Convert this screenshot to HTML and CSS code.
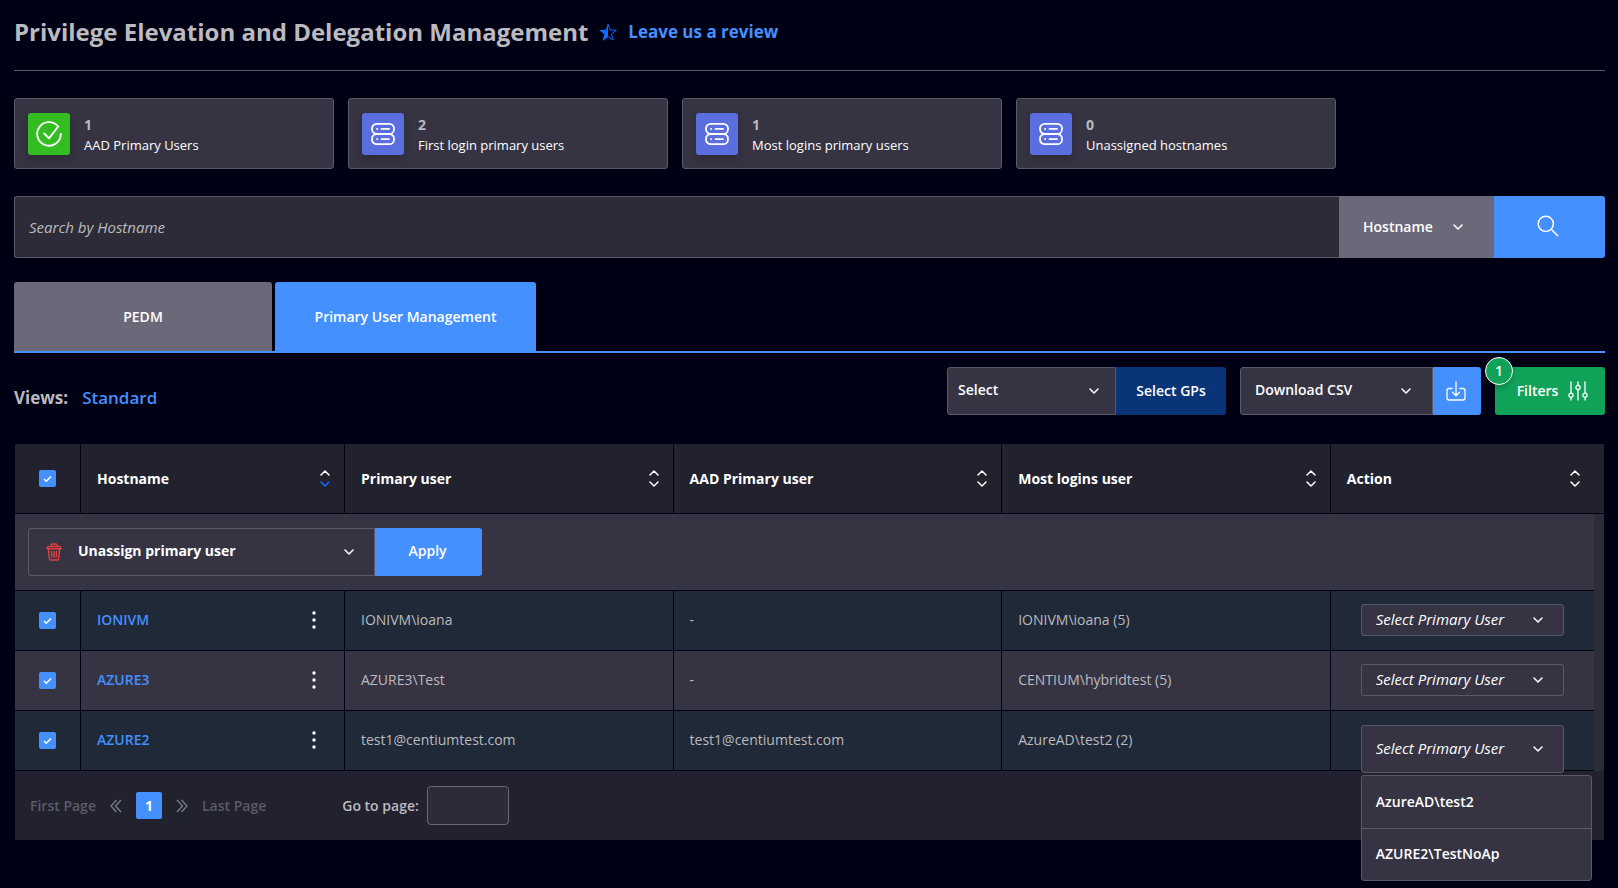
FILE: index.html
```html
<!DOCTYPE html>
<html lang="en">
<head>
<meta charset="utf-8">
<title>Privilege Elevation and Delegation Management</title>
<link rel="stylesheet" href="styles.css">
</head>
<body>
<svg class="sprite" aria-hidden="true">
  <symbol id="chevron" viewBox="0 0 10 6"><path d="M1 1l4 4 4-4" fill="none" stroke="currentColor" stroke-width="1.5" stroke-linecap="round" stroke-linejoin="round"/></symbol>
  <symbol id="sort-up" viewBox="0 0 10 6"><path d="M1 5l4-4 4 4" fill="none" stroke="currentColor" stroke-width="1.5" stroke-linecap="round" stroke-linejoin="round"/></symbol>
  <symbol id="server" viewBox="0 0 24 24"><g fill="none" stroke="currentColor" stroke-width="1.800" stroke-linecap="round"><rect x="1" y="1.800" width="22" height="10.200" rx="4.800"/><rect x="1" y="12" width="22" height="10.200" rx="4.800"/><path d="M10.500 6.900h7.500M10.500 17.100h7.500M6 6.900h.3M6 17.100h.3"/></g></symbol>
  <symbol id="dots" viewBox="0 0 4 18"><g fill="currentColor"><circle cx="2" cy="2" r="1.700"/><circle cx="2" cy="9" r="1.700"/><circle cx="2" cy="16" r="1.700"/></g></symbol>
</svg>
<main class="page">
  <header class="page-header">
    <h1 class="title">Privilege Elevation and Delegation Management</h1>
    <a class="review" href="#">
      <svg class="star" viewBox="0 0 18 18" aria-hidden="true"><path d="M9 .2v14.100L3.400 17.900l2-6.700L0 6.900l6.900-.2z" fill="currentColor"/><path d="M9 1l2.100 6 6.200.2-4.900 3.900 1.800 5.900L9 13.500" fill="none" stroke="currentColor" stroke-width="1"/></svg>
      Leave us a review
    </a>
  </header>

  <section class="cards">
    <article class="card">
      <span class="card-icon card-icon-ok"><svg class="icon-26" viewBox="0 0 26 26" aria-hidden="true"><path d="M24.800 13A11.800 11.800 0 1 1 22.200 5.500L13 17.300 8.200 12.500" fill="none" stroke="currentColor" stroke-width="1.900" stroke-linecap="round" stroke-linejoin="round"/></svg></span>
      <div class="card-text"><p class="card-count">1</p><p class="card-label">AAD Primary Users</p></div>
    </article>
    <article class="card">
      <span class="card-icon"><svg class="icon-24" aria-hidden="true"><use href="#server"/></svg></span>
      <div class="card-text"><p class="card-count">2</p><p class="card-label">First login primary users</p></div>
    </article>
    <article class="card">
      <span class="card-icon"><svg class="icon-24" aria-hidden="true"><use href="#server"/></svg></span>
      <div class="card-text"><p class="card-count">1</p><p class="card-label">Most logins primary users</p></div>
    </article>
    <article class="card">
      <span class="card-icon"><svg class="icon-24" aria-hidden="true"><use href="#server"/></svg></span>
      <div class="card-text"><p class="card-count">0</p><p class="card-label">Unassigned hostnames</p></div>
    </article>
  </section>

  <form class="search">
    <input class="search-input" type="search" placeholder="Search by Hostname" aria-label="Search by Hostname">
    <div class="picker search-field">
      <select aria-label="Search field"><option>Hostname</option></select>
      <svg class="chevron" aria-hidden="true"><use href="#chevron"/></svg>
    </div>
    <button class="search-button" type="button" aria-label="Search"><svg class="icon-22" viewBox="0 0 22 22" aria-hidden="true"><g fill="none" stroke="currentColor" stroke-width="1.500" stroke-linecap="round"><circle cx="8.800" cy="8.800" r="7.600"/><path d="M14.300 14.300l6.400 6.400"/></g></svg></button>
  </form>

  <nav class="tabs">
    <button class="tab" type="button">PEDM</button>
    <button class="tab tab-active" type="button">Primary User Management</button>
  </nav>

  <section class="toolbar">
    <div class="views"><span class="views-label">Views:</span><a class="views-link" href="#">Standard</a></div>
    <div class="tools">
      <div class="group">
        <div class="picker picker-box group-select">
          <select aria-label="Group policy action"><option>Select</option></select>
          <svg class="chevron" aria-hidden="true"><use href="#chevron"/></svg>
        </div>
        <button class="button button-navy" type="button">Select GPs</button>
      </div>
      <div class="group">
        <div class="picker picker-box download-select">
          <select aria-label="Download format"><option>Download CSV</option></select>
          <svg class="chevron" aria-hidden="true"><use href="#chevron"/></svg>
        </div>
        <button class="button button-icon" type="button" aria-label="Download"><svg class="icon-20" viewBox="0 0 20 20" aria-hidden="true"><path d="M10 1v13.500M6.500 11.200l3.500 3.500 3.500-3.500M6 7.500H3a2 2 0 0 0-2 2V17a2 2 0 0 0 2 2h14a2 2 0 0 0 2-2V9.500a2 2 0 0 0-2-2h-3" fill="none" stroke="currentColor" stroke-width="1.300" stroke-linecap="round" stroke-linejoin="round"/></svg></button>
      </div>
      <button class="button button-filters" type="button">
        <span class="badge">1</span>
        Filters
        <svg class="icon-20" viewBox="0 0 20 20" aria-hidden="true"><g fill="none" stroke="currentColor" stroke-width="1.300" stroke-linecap="round"><path d="M3 1v11M3 16.500V19M10 1v3.500M10 8.500V19M17 1v11M17 16.500V19"/><circle cx="3" cy="14.200" r="2.100"/><circle cx="10" cy="6.500" r="2.100"/><circle cx="17" cy="14.200" r="2.100"/></g></svg>
      </button>
    </div>
  </section>

  <section class="panel">
    <table class="grid">
      <colgroup><col class="col-check"><col class="col-host"><col class="col-data"><col class="col-data"><col class="col-data"><col><col class="col-gutter"></colgroup>
      <thead>
        <tr>
          <th class="check-cell"><input class="check" type="checkbox" checked aria-label="Select all"></th>
          <th><button class="sort" type="button">Hostname<span class="arrows"><svg aria-hidden="true"><use href="#sort-up"/></svg><svg class="arrow-on" aria-hidden="true"><use href="#chevron"/></svg></span></button></th>
          <th><button class="sort" type="button">Primary user<span class="arrows"><svg aria-hidden="true"><use href="#sort-up"/></svg><svg aria-hidden="true"><use href="#chevron"/></svg></span></button></th>
          <th><button class="sort" type="button">AAD Primary user<span class="arrows"><svg aria-hidden="true"><use href="#sort-up"/></svg><svg aria-hidden="true"><use href="#chevron"/></svg></span></button></th>
          <th><button class="sort" type="button">Most logins user<span class="arrows"><svg aria-hidden="true"><use href="#sort-up"/></svg><svg aria-hidden="true"><use href="#chevron"/></svg></span></button></th>
          <th class="action-head" colspan="2"><button class="sort" type="button">Action<span class="arrows"><svg aria-hidden="true"><use href="#sort-up"/></svg><svg aria-hidden="true"><use href="#chevron"/></svg></span></button></th>
        </tr>
      </thead>
      <tbody>
        <tr>
          <td class="bulk" colspan="6">
            <div class="group">
              <div class="picker picker-box bulk-select">
                <svg class="trash" viewBox="0 0 16 18" aria-hidden="true"><path d="M2 3.500h12l1.200 2.300H.8zM5.200 3.500V2a1 1 0 0 1 1-1h3.600a1 1 0 0 1 1 1v1.500M2.400 5.800l.9 10a1.300 1.300 0 0 0 1.300 1.200h6.800a1.300 1.300 0 0 0 1.300-1.200l.9-10M5.500 8.500l.3 5.800M8 8.500v5.800M10.500 8.500l-.3 5.800" fill="none" stroke="currentColor" stroke-width="1.400" stroke-linecap="round" stroke-linejoin="round"/></svg>
                <select aria-label="Bulk action"><option>Unassign primary user</option></select>
                <svg class="chevron" aria-hidden="true"><use href="#chevron"/></svg>
              </div>
              <button class="button button-apply" type="button">Apply</button>
            </div>
          </td>
          <td class="gutter" rowspan="4"></td>
        </tr>
        <tr class="row-tinted">
          <td class="check-cell"><input class="check" type="checkbox" checked aria-label="Select IONIVM"></td>
          <td><div class="host"><a href="#">IONIVM</a><button class="more" type="button" aria-label="More"><svg aria-hidden="true"><use href="#dots"/></svg></button></div></td>
          <td>IONIVM\ioana</td><td>-</td><td>IONIVM\ioana (5)</td>
          <td class="action-cell"><div class="picker picker-box user-select"><select aria-label="Primary user for IONIVM"><option>Select Primary User</option></select><svg class="chevron" aria-hidden="true"><use href="#chevron"/></svg></div></td>
        </tr>
        <tr>
          <td class="check-cell"><input class="check" type="checkbox" checked aria-label="Select AZURE3"></td>
          <td><div class="host"><a href="#">AZURE3</a><button class="more" type="button" aria-label="More"><svg aria-hidden="true"><use href="#dots"/></svg></button></div></td>
          <td>AZURE3\Test</td><td>-</td><td>CENTIUM\hybridtest (5)</td>
          <td class="action-cell"><div class="picker picker-box user-select"><select aria-label="Primary user for AZURE3"><option>Select Primary User</option></select><svg class="chevron" aria-hidden="true"><use href="#chevron"/></svg></div></td>
        </tr>
        <tr class="row-tinted">
          <td class="check-cell"><input class="check" type="checkbox" checked aria-label="Select AZURE2"></td>
          <td><div class="host"><a href="#">AZURE2</a><button class="more" type="button" aria-label="More"><svg aria-hidden="true"><use href="#dots"/></svg></button></div></td>
          <td>test1@centiumtest.com</td><td>test1@centiumtest.com</td><td>AzureAD\test2 (2)</td>
          <td class="action-cell action-cell-open">
            <div class="user-anchor">
              <div class="user-open">
                <div class="picker picker-box user-select user-select-open"><select aria-label="Primary user for AZURE2"><option>Select Primary User</option></select><svg class="chevron" aria-hidden="true"><use href="#chevron"/></svg></div>
                <div class="menu"><button class="menu-item" type="button">AzureAD\test2</button><button class="menu-item" type="button">AZURE2\TestNoAp</button></div>
              </div>
            </div>
          </td>
        </tr>
      </tbody>
    </table>
    <footer class="pager">
      <div class="pages">
        <button class="page-link" type="button" disabled>First Page</button>
        <button class="page-link page-arrow" type="button" aria-label="Previous page"><svg viewBox="0 0 12 14" aria-hidden="true"><path d="M6.500 1l-5.500 6 5.500 6M11 1L5.500 7l5.500 6"/></svg></button>
        <button class="page-current" type="button">1</button>
        <button class="page-link page-arrow" type="button" aria-label="Next page"><svg viewBox="0 0 12 14" aria-hidden="true"><path d="M1 1l5.500 6L1 13M5.500 1L11 7l-5.500 6"/></svg></button>
        <button class="page-link" type="button" disabled>Last Page</button>
      </div>
      <label class="goto">Go to page:<input class="goto-input" type="text"></label>
    </footer>
  </section>
</main>
</body>
</html>
```
FILE: styles.css
```css
* { box-sizing: border-box; }

body {
  margin: 0;
  background: #000015;
  color: #bbbabf;
  font: 14px/20px "Open Sans", "Noto Sans", sans-serif;
}

button, input, select { font: inherit; color: inherit; }
button { border: 0; padding: 0; background: none; cursor: pointer; }
a { color: #4490ff; text-decoration: none; }
p, h1 { margin: 0; }
svg { display: block; flex: none; }

.sprite { position: absolute; width: 0; height: 0; }
.icon-20 { width: 20px; height: 20px; }
.icon-22 { width: 22px; height: 22px; }
.icon-24 { width: 24px; height: 24px; }
.icon-26 { width: 26px; height: 26px; }

.page { min-height: 100vh; padding: 16px 13px 8px 14px; }

.page-header {
  display: flex;
  align-items: center;
  gap: 11px;
  padding-bottom: 22px;
  border-bottom: 1px solid #5c5a69;
}
.title { font-size: 24px; line-height: 32px; font-weight: 700; }
.review { display: flex; align-items: center; gap: 11px; font-size: 17px; font-weight: 700; }
.star { width: 18px; height: 18px; color: #0d6bff; }

.cards { display: flex; gap: 14px; margin-top: 27px; }
.card {
  flex: 0 1 320px;
  display: flex;
  align-items: center;
  gap: 14px;
  height: 71px;
  padding: 0 13px;
  background: #363443;
  border: 1px solid #5c5a69;
  border-radius: 3px;
}
.card-icon {
  display: grid;
  place-items: center;
  width: 42px;
  height: 42px;
  border-radius: 3px;
  background: #5a6ee0;
  color: #fff;
  box-shadow: 0 4px 8px rgba(0, 0, 0, .2);
}
.card-icon-ok { background: #34bd21; }
.card-text { padding-top: 2px; }
.card-count { font-weight: 700; }
.card-label { font-size: 13px; color: #fff; }

.picker { display: grid; align-items: center; color: #fff; }
.picker > * { grid-area: 1 / 1; }
.picker select {
  width: 100%;
  height: 100%;
  margin: 0;
  border: 0;
  outline: 0;
  background: transparent;
  appearance: none;
  font-weight: 600;
}
.picker option { background: #363443; }
.chevron { width: 10px; height: 6px; justify-self: end; pointer-events: none; }
.picker-box {
  background: #363443;
  border: 1px solid #5c5a69;
  border-radius: 3px;
}

.search { display: flex; height: 62px; margin-top: 27px; }
.search-input {
  flex: 1;
  padding: 0 14px;
  background: #2d2b38;
  border: 1px solid #5c5a69;
  border-right: 0;
  border-radius: 3px 0 0 3px;
  outline: 0;
  font-size: 15px;
}
.search-input::placeholder { color: #bbbabf; font-style: italic; opacity: 1; }
.search-field { width: 155px; background: #6b6979; }
.search-field select { padding: 0 24px; }
.search-field .chevron { margin-right: 31px; }
.search-button {
  display: grid;
  place-items: center;
  width: 111px;
  padding: 0 3px 3px 0;
  background: #4490ff;
  border-radius: 0 3px 3px 0;
  color: #fff;
}

.tabs { display: flex; gap: 3px; margin-top: 24px; border-bottom: 2px solid #4490ff; }
.tab {
  width: 258px;
  height: 69px;
  border-radius: 3px 3px 0 0;
  background: #6b6979;
  color: #fff;
  font-weight: 600;
}
.tab-active { width: 261px; background: #4490ff; }

.toolbar { display: flex; justify-content: space-between; align-items: center; margin-top: 14px; }
.views { display: flex; gap: 14px; padding-top: 14px; font-size: 17px; font-weight: 700; }
.views-link { font-weight: 600; }
.tools { display: flex; gap: 14px; }
.group { display: flex; height: 48px; }
.group .picker-box { border-radius: 3px 0 0 3px; }
.group-select { width: 169px; }
.group-select select { padding: 0 10px 2px; }
.group-select .chevron { margin-right: 16px; }
.download-select { width: 193px; }
.download-select select { padding: 0 14px 2px; }
.download-select .chevron { margin-right: 21px; }
.button { height: 48px; color: #fff; font-weight: 600; border-radius: 0 3px 3px 0; }
.button-navy { width: 110px; background: #093477; }
.button-icon { display: grid; place-items: center; width: 48px; padding-right: 2px; background: #4490ff; }
.button-filters {
  position: relative;
  display: flex;
  align-items: center;
  justify-content: center;
  gap: 10px;
  width: 110px;
  padding-left: 5px;
  background: #11a25a;
  border-radius: 3px;
}
.badge {
  position: absolute;
  left: -10px;
  top: -10px;
  width: 28px;
  height: 28px;
  border: 1px solid #fff;
  border-radius: 50%;
  background: #11a25a;
  line-height: 26px;
  box-shadow: 0 3px 6px rgba(0, 0, 0, .2);
}

.panel { margin: 29px 1px 0; background: #22212e; border-radius: 3px 3px 0 0; }
.grid { width: 100%; table-layout: fixed; border-spacing: 0; }
.col-check { width: 66px; }
.col-host { width: 264px; }
.col-data { width: 20.68%; }
.col-gutter { width: 10px; }

.grid th, .grid td {
  height: 60px;
  padding: 0 16px;
  border-right: 1px solid #000015;
  border-bottom: 1px solid #000015;
  background: #363443;
  text-align: left;
}
.grid td { padding-bottom: 2px; }
.grid th { height: 70px; padding-right: 14px; background: #22212e; }
.grid th:first-child { border-top-left-radius: 3px; }
.grid .action-head { border-right: 0; padding-right: 24px; }
.grid .row-tinted > td { background: #1f2937; }
.grid .check-cell { padding: 0; text-align: center; }
.grid .bulk { height: 77px; padding: 0 13px; border-right: 0; }
.grid .gutter { padding: 0; border: 0; background: #2d2b38; }
.grid .action-cell { padding: 0 0 2px 30px; border-right: 0; }
.grid .action-cell-open { padding-bottom: 0; }

.check {
  display: block;
  width: 17px;
  height: 17px;
  margin: 0 auto;
  appearance: none;
  border-radius: 2px;
  background: #2d2b38;
}
.check:checked {
  background: #4490ff url("data:image/svg+xml,%3Csvg xmlns='http://www.w3.org/2000/svg' viewBox='0 0 17 17'%3E%3Cpath d='M5 9l2.300 2.300L12 6.500' fill='none' stroke='white' stroke-width='1.500'/%3E%3C/svg%3E");
}

.sort {
  display: flex;
  align-items: center;
  justify-content: space-between;
  width: 100%;
  color: #fff;
  font-weight: 700;
}
.arrows { display: grid; gap: 5px; }
.arrows svg { width: 10px; height: 6px; }
.arrow-on { color: #0d6bff; }

.host { display: flex; align-items: center; justify-content: space-between; padding-right: 7px; font-weight: 600; }
.more { width: 14px; display: grid; place-items: center; color: #fff; }
.more svg { width: 4px; height: 18px; }

.bulk-select { width: 347px; }
.bulk-select select { padding: 0 49px 2px; font-weight: 700; }
.bulk-select .chevron { margin-right: 20px; }
.trash { width: 16px; height: 18px; margin-left: 17px; color: #e5403f; pointer-events: none; }
.button-apply { width: 107px; padding: 0 2px 2px 0; background: #4490ff; }

.user-select { width: 203px; height: 32px; }
.user-select select { padding: 0 14px 2px; font-size: 15px; font-weight: 400; font-style: italic; }
.user-select .chevron { margin-right: 20px; }
.user-anchor { position: relative; height: 32px; }
.user-open { position: absolute; top: 0; left: 0; width: 231px; }
.user-select-open { height: 48px; }
.menu {
  display: grid;
  margin-top: 2px;
  border: 1px solid #5c5a69;
  border-radius: 3px;
  background: #363443;
}
.menu-item { height: 52px; padding: 0 14px; text-align: left; color: #fff; font-weight: 600; }
.menu-item + .menu-item { border-top: 1px solid #5c5a69; }

.pager { display: flex; align-items: center; gap: 76px; height: 69px; padding: 0 15px; }
.pages { display: flex; align-items: center; gap: 14px; }
.page-link { color: #5c5a69; font-weight: 600; }
.page-arrow svg { width: 12px; height: 14px; fill: none; stroke: #77828f; stroke-width: 1.300; }
.page-current { width: 26px; height: 27px; border-radius: 2px; background: #4490ff; color: #fff; font-weight: 700; }
.goto { display: flex; align-items: center; gap: 8px; font-weight: 600; }
.goto-input {
  width: 82px;
  height: 39px;
  padding: 0 8px;
  border: 1px solid #6b6979;
  border-radius: 4px;
  background: #2d2b38;
}
```
